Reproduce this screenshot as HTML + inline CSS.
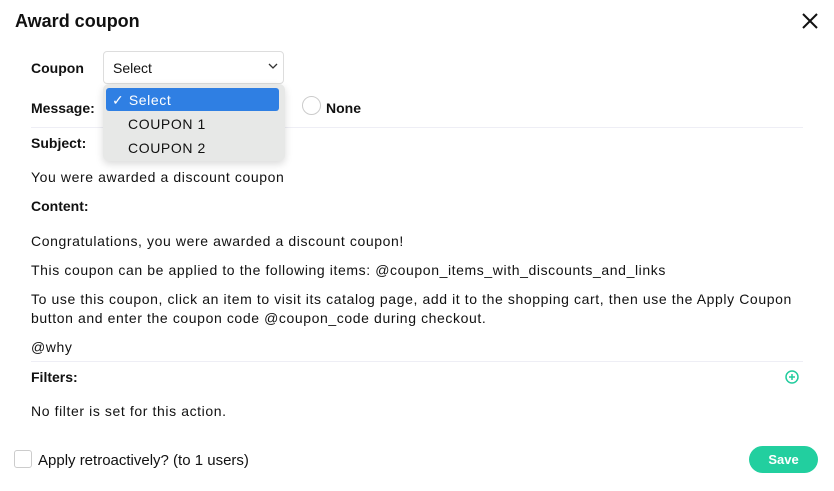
<!DOCTYPE html>
<html><head><meta charset="utf-8"><style>
body{margin:0;width:834px;height:491px;background:#fff;font-family:"Liberation Sans",sans-serif;color:#111;position:relative;overflow:hidden}
.a{position:absolute;white-space:nowrap}
.b{font-weight:bold}
.t{font-size:14px}
.w{letter-spacing:.6px}
</style></head><body>
<div class="a b" style="left:15px;top:11px;font-size:18px">Award coupon</div>
<svg class="a" style="left:802px;top:13px" width="16" height="16"><path d="M1 1L15 15M15 1L1 15" stroke="#111" stroke-width="2"/></svg>
<div class="a b t" style="left:31px;top:60px">Coupon</div>
<div class="a" style="left:103px;top:51px;width:179px;height:31px;border:1px solid #ddd;border-radius:4px"></div>
<div class="a t" style="left:113px;top:60px">Select</div>
<svg class="a" style="left:268px;top:63px" width="10" height="7"><path d="M1 1L5 5L9 1" stroke="#333" stroke-width="1.3" fill="none"/></svg>
<div class="a b t" style="left:31px;top:100px">Message:</div>
<div class="a t" style="left:278px;top:100px">n</div>
<div class="a" style="left:302px;top:96px;width:17px;height:17px;border:1px solid #ccc;border-radius:50%"></div>
<div class="a b t" style="left:326px;top:100px">None</div>
<div class="a" style="left:31px;top:127px;width:772px;height:1px;background:#eeeef5"></div>
<div class="a b t" style="left:31px;top:135px">Subject:</div>
<div class="a" style="left:103px;top:84px;width:182px;height:77px;background:#e7e8e7;border-radius:6px;box-shadow:0 3px 8px rgba(0,0,0,.15)"></div>
<div class="a" style="left:106px;top:88px;width:173px;height:23px;background:#2f7fe3;border-radius:3px"></div>
<div class="a t w" style="left:112px;top:92px;color:#fff">✓ Select</div>
<div class="a t w" style="left:128px;top:116px">COUPON 1</div>
<div class="a t w" style="left:128px;top:140px">COUPON 2</div>
<div class="a t w" style="left:31px;top:169px">You were awarded a discount coupon</div>
<div class="a b t" style="left:31px;top:198px">Content:</div>
<div class="a t w" style="left:31px;top:233px">Congratulations, you were awarded a discount coupon!</div>
<div class="a t w" style="left:31px;top:262px">This coupon can be applied to the following items: @coupon_items_with_discounts_and_links</div>
<div class="a t w" style="left:31px;top:291px">To use this coupon, click an item to visit its catalog page, add it to the shopping cart, then use the Apply Coupon</div>
<div class="a t w" style="left:31px;top:310px">button and enter the coupon code @coupon_code during checkout.</div>
<div class="a t w" style="left:31px;top:339px">@why</div>
<div class="a" style="left:31px;top:361px;width:772px;height:1px;background:#eeeef5"></div>
<div class="a b t" style="left:31px;top:369px">Filters:</div>
<svg class="a" style="left:785px;top:370px" width="14" height="14"><circle cx="7" cy="7" r="6" stroke="#22cc9e" stroke-width="1.5" fill="none"/><path d="M7 4V10M4 7H10" stroke="#22cc9e" stroke-width="1.5"/></svg>
<div class="a t w" style="left:31px;top:403px">No filter is set for this action.</div>
<div class="a" style="left:14px;top:450px;width:16px;height:16px;border:1px solid #ccc;border-radius:3px"></div>
<div class="a" style="left:38px;top:452px;font-size:15px">Apply retroactively? (to 1 users)</div>
<div class="a b" style="left:749px;top:446px;width:69px;height:27px;background:#22cf9f;border-radius:14px;color:#fff;font-size:13px;text-align:center;line-height:27px">Save</div>
</body></html>
